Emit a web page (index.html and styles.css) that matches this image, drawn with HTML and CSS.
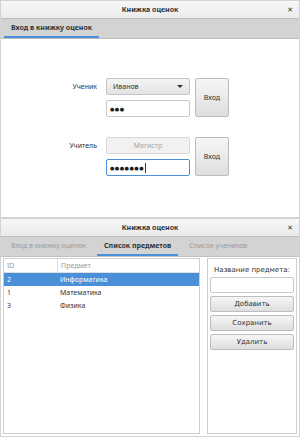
FILE: index.html
```html
<!DOCTYPE html>
<html lang="ru">
<head>
    <meta charset="UTF-8">
    <title>Книжка оценок</title>
    <link rel="stylesheet" href="styles.css">
</head>
<body>
    <div class="window window-login">
        <div class="titlebar">
            <span class="title">Книжка оценок</span>
            <span class="close">&#x2715;</span>
        </div>
        <div class="tabs">
            <div class="tab active">Вход в книжку оценок</div>
        </div>
        <div class="login-content">
            <div class="login-group">
                <div class="login-labels">
                    <div class="login-label">Ученик</div>
                </div>
                <div class="login-fields">
                    <div class="combo">
                        <span>Иванов</span>
                        <span class="combo-arrow"></span>
                    </div>
                    <div class="entry">&#x25CF;&#x25CF;&#x25CF;</div>
                </div>
                <button class="btn btn-tall">Вход</button>
            </div>
            <div class="login-group">
                <div class="login-labels">
                    <div class="login-label">Учитель</div>
                </div>
                <div class="login-fields">
                    <div class="combo combo-disabled">Магистр</div>
                    <div class="entry entry-focus">&#x25CF;&#x25CF;&#x25CF;&#x25CF;&#x25CF;&#x25CF;&#x25CF;<span class="caret"></span></div>
                </div>
                <button class="btn btn-tall">Вход</button>
            </div>
        </div>
    </div>

    <div class="window window-subjects">
        <div class="titlebar">
            <span class="title">Книжка оценок</span>
            <span class="close">&#x2715;</span>
        </div>
        <div class="tabs">
            <div class="tab">Вход в книжку оценок</div>
            <div class="tab active">Список предметов</div>
            <div class="tab">Список учеников</div>
        </div>
        <div class="subjects-content">
            <div class="table-frame">
                <div class="table-row table-head">
                    <div class="cell cell-id">ID</div>
                    <div class="cell">Предмет</div>
                </div>
                <div class="table-row selected">
                    <div class="cell cell-id">2</div>
                    <div class="cell">Информатика</div>
                </div>
                <div class="table-row">
                    <div class="cell cell-id">1</div>
                    <div class="cell">Математика</div>
                </div>
                <div class="table-row">
                    <div class="cell cell-id">3</div>
                    <div class="cell">Физика</div>
                </div>
            </div>
            <div class="side-panel">
                <div class="side-label">Название предмета:</div>
                <div class="entry side-entry"></div>
                <button class="btn side-btn">Добавить</button>
                <button class="btn side-btn">Сохранить</button>
                <button class="btn side-btn">Удалить</button>
            </div>
        </div>
    </div>
</body>
</html>
```

FILE: styles.css
```css
body {
    margin: 0;
    padding: 0;
    width: 300px;
    font-family: 'Noto Sans', 'DejaVu Sans', sans-serif;
    font-size: 7px;
    color: #2e3436;
    background: #fff;
}
.window {
    border: 1px solid #d3d3d3;
    background: #fff;
    box-sizing: border-box;
    display: flex;
    flex-direction: column;
}
.window-login {
    height: 218px;
}
.window-subjects {
    height: 219px;
}
.titlebar {
    height: 17px;
    flex-shrink: 0;
    position: relative;
    display: flex;
    align-items: center;
    justify-content: center;
    background: linear-gradient(#f7f7f7, #ebebeb);
    border-bottom: 1px solid #bdbdbd;
}
.title {
    font-weight: 700;
    font-size: 7px;
    color: #2e3436;
}
.close {
    position: absolute;
    right: 6px;
    top: 4px;
    font-size: 7px;
    font-weight: 700;
    color: #2e3436;
}
.tabs {
    height: 19px;
    flex-shrink: 0;
    display: flex;
    padding-left: 3px;
    background: #d3d3d3;
    border-bottom: 1px solid #c0c0c0;
}
.tab {
    padding: 0 7px;
    display: flex;
    align-items: center;
    color: #999b9b;
    border-bottom: 2px solid transparent;
}
.tab.active {
    color: #2e3436;
    font-weight: 700;
    border-bottom-color: #4a90d9;
}
.window-subjects .tab.active {
    margin-left: 4px;
    margin-right: 4px;
}
.login-content {
    flex: 1;
    padding: 39px 0 0 0;
    display: flex;
    flex-direction: column;
    gap: 20px;
}
.login-group {
    display: flex;
    gap: 5px;
}
.login-labels {
    width: 100px;
    display: flex;
    justify-content: flex-end;
    padding-right: 4px;
    box-sizing: border-box;
}
.login-label {
    height: 17px;
    line-height: 17px;
}
.login-fields {
    width: 84px;
    display: flex;
    flex-direction: column;
    gap: 5px;
}
.combo {
    height: 17px;
    box-sizing: border-box;
    border: 1px solid #c4c4c4;
    border-radius: 2px;
    background: linear-gradient(#f4f4f4, #e3e3e3);
    display: flex;
    align-items: center;
    justify-content: space-between;
    padding: 0 6px;
}
.combo-arrow {
    width: 0;
    height: 0;
    border-left: 3px solid transparent;
    border-right: 3px solid transparent;
    border-top: 3px solid #2e3436;
}
.combo-disabled {
    justify-content: center;
    background: #f1f1f1;
    border-color: #d8d8d8;
    color: #a3a5a5;
}
.entry {
    height: 17px;
    box-sizing: border-box;
    border: 1px solid #c8c8c8;
    border-radius: 2px;
    background: #fff;
    display: flex;
    align-items: center;
    padding: 0 3px;
    font-size: 5px;
    letter-spacing: 0.5px;
    color: #1c1c1c;
}
.entry-focus {
    border-color: #4a90d9;
}
.caret {
    width: 1px;
    height: 10px;
    margin-left: 1px;
    background: #2e3436;
}
.btn {
    font-family: inherit;
    font-size: 7px;
    color: #2e3436;
    border: 1px solid #bdbdbd;
    border-radius: 2px;
    background: linear-gradient(#f6f6f6, #dedede);
    padding: 0;
    margin: 0;
    box-sizing: border-box;
}
.btn-tall {
    width: 34px;
    height: 39px;
}
.subjects-content {
    flex: 1;
    display: flex;
    padding: 1px 2px 2px 2px;
    gap: 7px;
}
.table-frame {
    width: 197px;
    border: 1px solid #cfcfcf;
    box-sizing: border-box;
    background: #fff;
}
.table-row {
    display: flex;
    height: 13px;
    align-items: center;
}
.table-head {
    color: #9a9c9c;
    border-bottom: 1px solid #e0e0e0;
    height: 13px;
}
.table-head .cell-id {
    border-right: 1px solid #e0e0e0;
    height: 13px;
    line-height: 13px;
}
.cell {
    padding-left: 3px;
}
.cell-id {
    width: 50px;
}
.selected {
    background: #4a90d9;
    color: #fff;
}
.side-panel {
    flex: 1;
    border: 1px solid #cfcfcf;
    box-sizing: border-box;
    display: flex;
    flex-direction: column;
    padding: 7px 2px 0 2px;
    gap: 3px;
}
.side-label {
    text-align: center;
    font-family: 'DejaVu Sans', sans-serif;
    font-size: 7px;
    line-height: 8px;
}
.side-entry {
    height: 16px;
}
.side-btn {
    height: 16px;
    font-family: 'DejaVu Sans', sans-serif;
}
```
